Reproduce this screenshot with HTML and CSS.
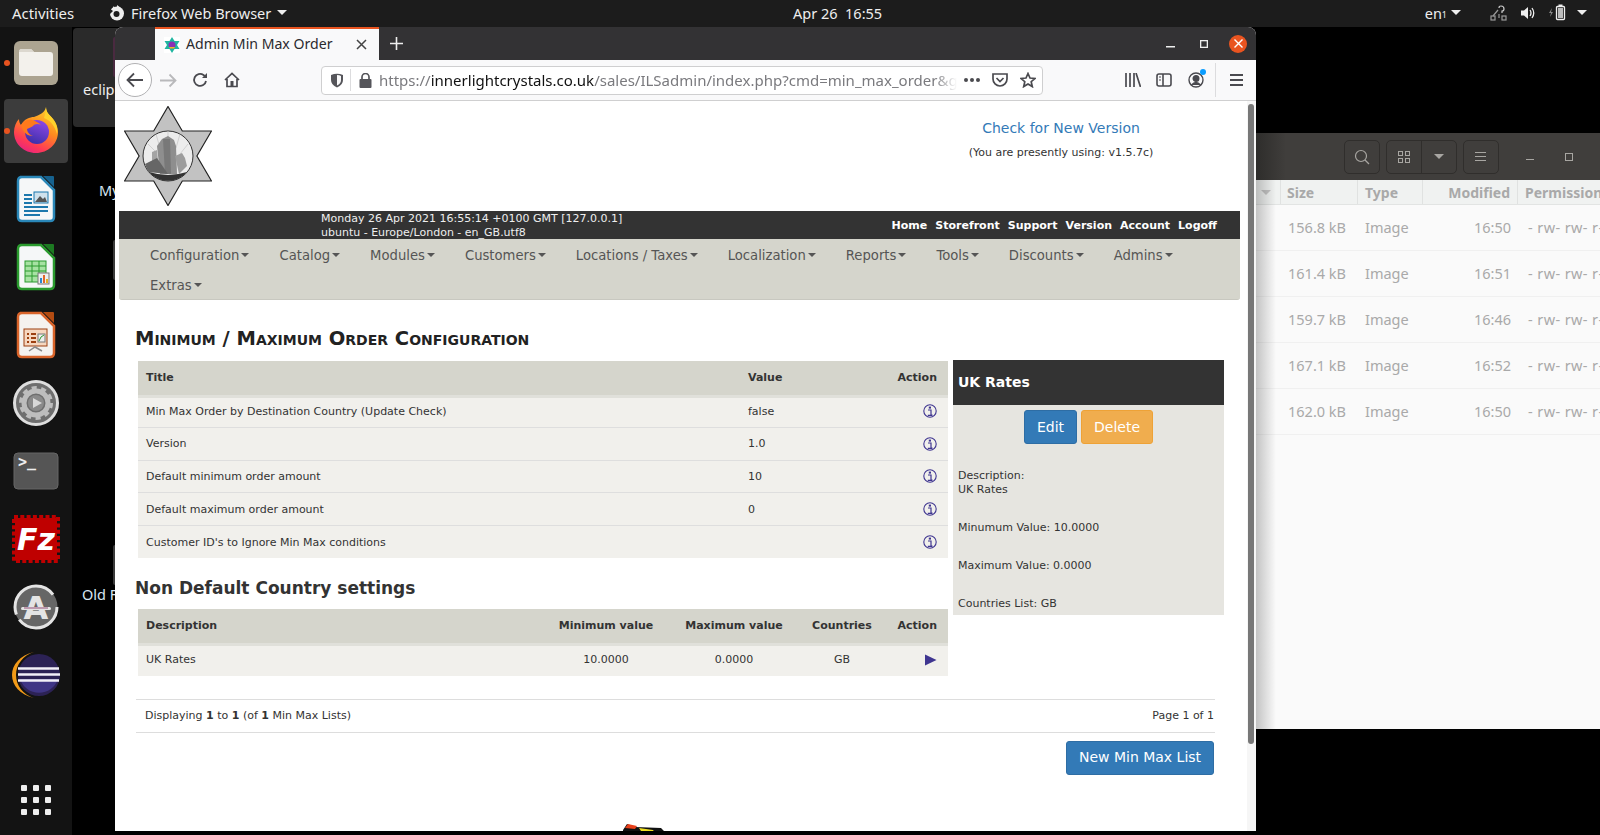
FILE: index.html
```html
<!DOCTYPE html>
<html lang="en">
<head>
    <meta charset="UTF-8">
    <title>Admin Min Max Order</title>
    <link rel="stylesheet" href="styles.css">
</head>
<body>
<div class="topbar">
    <span class="activities">Activities</span>
    <span class="app-menu">
        <svg width="16" height="16" viewBox="0 0 16 16"><circle cx="8" cy="8.5" r="7" fill="#eee"/><circle cx="7.5" cy="9" r="3" fill="#1c1c1c"/><path d="M1 6 L5 1 L6 6 Z M8 0 L12 3 L8 5 Z" fill="#eee"/><path d="M0 3 L4 6 L1 9 Z" fill="#1c1c1c"/></svg>
        Firefox Web Browser <i class="tri"></i>
    </span>
    <span class="clock">Apr 26&nbsp;&nbsp;16:55</span>
    <span class="tray">
        <span class="lang">en<small>1</small> <i class="tri"></i></span>
        <svg class="net" width="18" height="16" viewBox="0 0 18 16" fill="none" stroke="#999" stroke-width="1.2"><rect x="1" y="11" width="4" height="4"/><rect x="12" y="11" width="4" height="4"/><path d="M3 11 L8 5 M9 9 V13"/><path d="M9 3 Q9 1 11 1 Q14 1 14 4 Q14 6 12 6 V8" stroke="#ccc"/></svg>
        <svg class="vol" width="15" height="14" viewBox="0 0 15 14"><path d="M0 4.5 H3 L7 1 V13 L3 9.5 H0 Z" fill="#eee"/><path d="M9 4 Q11 7 9 10 M11 2 Q14.500 7 11 12" fill="none" stroke="#eee" stroke-width="1.300"/></svg>
        <svg class="bat" width="17" height="17" viewBox="0 0 17 17"><path d="M3 4 L0 9 H2 L1 13 L4 8 H2 Z" fill="#888"/><rect x="7.500" y="2.500" width="8" height="13" rx="1" fill="none" stroke="#eee" stroke-width="1.300"/><rect x="9.500" y="0.500" width="4" height="2" fill="#eee"/><rect x="9" y="4" width="5" height="10" fill="#bbb"/></svg>
        <i class="tri"></i>
    </span>
</div>

<div class="screen">
    <nav class="dock">
        <div class="dock-item running">
            <svg width="48" height="48" viewBox="0 0 48 48"><rect x="2" y="2" width="44" height="44" rx="6" fill="#aca491"/><path d="M7 13 Q7 10 10 10 H19 L22 13 H38 Q41 13 41 16 V34 Q41 37 38 37 H10 Q7 37 7 34 Z" fill="#f3f1ec"/><path d="M7 13 Q7 10 10 10 H19 L22 13 Z" fill="#dcd8cf"/></svg>
        </div>
        <div class="dock-item running active">
            <svg width="48" height="48" viewBox="0 0 48 48">
                <defs>
                    <linearGradient id="fxbody" x1="0.800" y1="0" x2="0.300" y2="1"><stop offset="0" stop-color="#ffd52e"/><stop offset="0.450" stop-color="#ff8a1f"/><stop offset="0.800" stop-color="#ff3a55"/><stop offset="1" stop-color="#e8247f"/></linearGradient>
                    <linearGradient id="fxglobe" x1="0.700" y1="0" x2="0.300" y2="1"><stop offset="0" stop-color="#8f47e6"/><stop offset="1" stop-color="#3a2fa8"/></linearGradient>
                </defs>
                <path d="M34 0 C34 6 38 8 41 12 C45 17 46 22 46 25 C46 37 36 46 24 46 C12 46 2 37 2 25 C2 20 4 15 7 12 C7 15 8 17 9 18 C12 12 18 10 22 10 C27 8 33 6 34 0 Z" fill="url(#fxbody)"/>
                <circle cx="25" cy="25" r="12" fill="url(#fxglobe)"/>
                <path d="M9 18 C12 13 17 12 20 13 C24 14 27 16 29 18 C26 16 22 17 21 19 C20 20 17 21 15 22 C15 25 18 28 21 29 C16 29 11 26 9 18 Z" fill="#ff7a1c"/>
                <path d="M34 0 C34 6 38 8 41 12 C45 17 46 22 45 27 C43 19 38 13 32 11 C33 7 34 4 34 0 Z" fill="#ffd22c"/>
            </svg>
        </div>
        <div class="dock-item">
            <svg width="48" height="48" viewBox="0 0 48 48"><path d="M8 2 H29 L42 15 V42 Q42 46 38 46 H10 Q6 46 6 42 V6 Q6 2 10 2 Z" fill="#f5f7f8" stroke="#2a87b8" stroke-width="2.500"/><path d="M31 1 H41 Q42 1 42 2 V12 Z" fill="#16628f"/><path d="M12 20 H20 M12 24 H20 M12 28 H20 M12 32 H36 M12 36 H36 M12 40 H28" stroke="#1c78ad" stroke-width="2"/><rect x="22" y="17" width="14" height="11" fill="#cfe1ec" stroke="#1c78ad"/><path d="M23 27 L28 21 L31 24 L33 22 L35 27 Z" fill="#555"/></svg>
        </div>
        <div class="dock-item">
            <svg width="48" height="48" viewBox="0 0 48 48"><path d="M8 2 H29 L42 15 V42 Q42 46 38 46 H10 Q6 46 6 42 V6 Q6 2 10 2 Z" fill="#f5f7f8" stroke="#2a9a2e" stroke-width="2.500"/><path d="M31 1 H41 Q42 1 42 2 V12 Z" fill="#1d7a22"/><rect x="13" y="18" width="21" height="21" fill="#a6e2a2" stroke="#2a9a2e"/><path d="M13 23 H34 M13 28 H34 M13 33 H34 M20 18 V39 M27 18 V39" stroke="#2a9a2e"/><rect x="26" y="30" width="11" height="11" fill="#eee" stroke="#777"/><rect x="28" y="35" width="2" height="5" fill="#2a87d0"/><rect x="31" y="32" width="2" height="8" fill="#e0662a"/><rect x="34" y="36" width="2" height="4" fill="#e8b020"/></svg>
        </div>
        <div class="dock-item">
            <svg width="48" height="48" viewBox="0 0 48 48"><path d="M8 2 H29 L42 15 V42 Q42 46 38 46 H10 Q6 46 6 42 V6 Q6 2 10 2 Z" fill="#f5f2ef" stroke="#d9642a" stroke-width="2.500"/><path d="M31 1 H41 Q42 1 42 2 V12 Z" fill="#b34c12"/><rect x="12" y="18" width="23" height="17" fill="#f6d7c0" stroke="#9c3f10"/><path d="M15 23 H17 M15 27 H17 M15 31 H17 M19 23 H24 M19 27 H24 M19 31 H24" stroke="#9c3f10" stroke-width="2"/><rect x="26" y="23" width="7" height="8" fill="#eee" stroke="#777"/><path d="M27 30 L29 26 L32 24" stroke="#2a9a2e" fill="none"/><path d="M17 40 L23 36 L30 40" stroke="#888" fill="none" stroke-width="1.500"/></svg>
        </div>
        <div class="dock-item">
            <svg width="48" height="48" viewBox="0 0 48 48"><circle cx="24" cy="24" r="21.500" fill="#6e6e6e" stroke="#dedede" stroke-width="3"/><circle cx="24" cy="24" r="12" fill="none" stroke="#bdbdbd" stroke-width="5"/><circle cx="24" cy="24" r="15" fill="none" stroke="#bdbdbd" stroke-width="4" stroke-dasharray="5 4.420"/><circle cx="24" cy="24" r="8" fill="#8a8a8a"/><path d="M21 19 L30 24 L21 29 Z" fill="#d8d8d8"/></svg>
        </div>
        <div class="dock-item">
            <svg width="48" height="48" viewBox="0 0 48 48"><rect x="2" y="6" width="44" height="36" rx="4" fill="#555" stroke="#666"/><text x="6" y="20" class="term-text">&gt;_</text></svg>
        </div>
        <div class="dock-item">
            <svg width="48" height="48" viewBox="0 0 48 48"><rect x="3" y="3" width="42" height="42" fill="#bf0000"/><rect x="2" y="2" width="44" height="44" fill="none" stroke="#bf0000" stroke-width="4" stroke-dasharray="4 2.300"/><text x="5" y="35" class="fz-text">Fz</text></svg>
        </div>
        <div class="dock-item">
            <svg width="48" height="48" viewBox="0 0 48 48"><circle cx="24" cy="24" r="21.500" fill="#666"/><circle cx="24" cy="24" r="21" fill="none" stroke="#e4e4e4" stroke-width="3" stroke-dasharray="52 6 60 14"/><text x="24" y="36" class="upd-text">A</text><rect x="9" y="24" width="30" height="3" rx="1.500" fill="#e4e4e4"/><rect x="12" y="24.500" width="24" height="1" fill="#95507a"/></svg>
        </div>
        <div class="dock-item">
            <svg width="48" height="48" viewBox="0 0 48 48"><path d="M22 1 C8 4 0 14 0 24 C0 34 8 44 22 47 C11 44 4 34 4 24 C4 14 11 4 22 1 Z" fill="#f29a18"/><circle cx="27" cy="24" r="21" fill="#2c2255"/><path d="M8 28 H46 A20 20 0 0 1 8 28 Z" fill="#3f3585"/><path d="M6 17.500 H47 M6 23.500 H48 M6 29.500 H47" stroke="#f2f0f8" stroke-width="2.500"/></svg>
        </div>
        <div class="app-grid">
            <i></i><i></i><i></i><i></i><i></i><i></i><i></i><i></i><i></i>
        </div>
    </nav>

    <div class="desktop">
        <div class="desk-tile">eclip</div>
        <span class="desk-label my">My</span>
        <span class="desk-label old">Old F</span>
        <i class="desk-thumb thumb-a"></i>
        <i class="desk-thumb thumb-b"></i>
        <i class="desk-thumb thumb-c"></i>

        <!-- file manager behind the browser -->
        <div class="files">
            <div class="files-head">
                <span class="hbtn"><svg width="16" height="16" viewBox="0 0 16 16" fill="none" stroke="#a8a6a2" stroke-width="1.200"><circle cx="7" cy="7" r="5.500"/><path d="M11 11 L15 15"/></svg></span>
                <span class="hbtn split">
                    <span class="seg"><svg width="12" height="12" viewBox="0 0 12 12" fill="none" stroke="#a8a6a2"><rect x="0.500" y="0.500" width="4" height="4"/><rect x="7.500" y="0.500" width="4" height="4"/><rect x="0.500" y="7.500" width="4" height="4"/><rect x="7.500" y="7.500" width="4" height="4"/></svg></span>
                    <span class="seg"><i class="files-tri"></i></span>
                </span>
                <span class="hbtn"><svg width="12" height="10" viewBox="0 0 12 10" stroke="#a8a6a2"><path d="M0 0.500 H11 M0 4.500 H11 M0 8.500 H11"/></svg></span>
                <span class="win-min"></span>
                <span class="win-max"></span>
            </div>
            <div class="files-cols">
                <span class="c-name"><i class="sort-tri"></i></span>
                <span class="c-size">Size</span>
                <span class="c-type">Type</span>
                <span class="c-mod">Modified</span>
                <span class="c-perm">Permission</span>
            </div>
            <div class="files-row"><span class="c-name"></span><span class="c-size">156.8 kB</span><span class="c-type">Image</span><span class="c-mod">16:50</span><span class="c-perm">- rw- rw- r--</span></div>
            <div class="files-row"><span class="c-name"></span><span class="c-size">161.4 kB</span><span class="c-type">Image</span><span class="c-mod">16:51</span><span class="c-perm">- rw- rw- r--</span></div>
            <div class="files-row"><span class="c-name"></span><span class="c-size">159.7 kB</span><span class="c-type">Image</span><span class="c-mod">16:46</span><span class="c-perm">- rw- rw- r--</span></div>
            <div class="files-row"><span class="c-name"></span><span class="c-size">167.1 kB</span><span class="c-type">Image</span><span class="c-mod">16:52</span><span class="c-perm">- rw- rw- r--</span></div>
            <div class="files-row"><span class="c-name"></span><span class="c-size">162.0 kB</span><span class="c-type">Image</span><span class="c-mod">16:50</span><span class="c-perm">- rw- rw- r--</span></div>
        </div>

        <!-- browser window -->
        <div class="browser">
            <div class="tabbar">
                <div class="tab">
                    <svg width="16" height="16" viewBox="0 0 16 16"><rect width="16" height="16" fill="#fff"/><path d="M8 0 L10.500 4 H15.500 L13 8 L15.500 12 H10.500 L8 16 L5.500 12 H0.500 L3 8 L0.500 4 H5.500 Z" fill="#1fb5a0"/><circle cx="8" cy="8" r="3.500" fill="#8a2fb5"/><path d="M5 10 H11 L10 11.500 H6 Z" fill="#e8c020"/></svg>
                    <span class="tab-title">Admin Min Max Order</span>
                    <svg class="tab-close" width="11" height="11" viewBox="0 0 11 11" stroke="#444" stroke-width="1.500"><path d="M1 1 L10 10 M10 1 L1 10"/></svg>
                </div>
                <svg class="new-tab" width="15" height="15" viewBox="0 0 15 15" stroke="#eee" stroke-width="1.600"><path d="M7.500 1 V14 M1 7.500 H14"/></svg>
                <svg class="ctl-min" width="9" height="2" viewBox="0 0 9 2"><rect width="9" height="1.500" fill="#eee"/></svg>
                <svg class="ctl-max" width="8" height="8" viewBox="0 0 8 8" fill="none" stroke="#eee" stroke-width="1.300"><rect x="0.650" y="0.650" width="6.700" height="6.700"/></svg>
                <span class="ctl-close"><svg width="9" height="9" viewBox="0 0 9 9" stroke="#fff" stroke-width="1.400"><path d="M0.500 0.500 L8.500 8.500 M8.500 0.500 L0.500 8.500"/></svg></span>
            </div>

            <div class="toolbar">
                <span class="back"><svg width="18" height="16" viewBox="0 0 18 16" fill="none" stroke="#4a4a4f" stroke-width="1.800"><path d="M17 8 H2 M8 1.500 L1.500 8 L8 14.500"/></svg></span>
                <span class="tool"><svg width="17" height="15" viewBox="0 0 17 15" fill="none" stroke="#b9b9bb" stroke-width="1.800"><path d="M0 7.500 H15 M9.500 1.500 L15.500 7.500 L9.500 13.500"/></svg></span>
                <span class="tool"><svg width="16" height="16" viewBox="0 0 16 16" fill="none" stroke="#4a4a4f" stroke-width="1.800"><path d="M14 9 A6 6 0 1 1 11.500 3 L14 5"/><path d="M15 1 V6 H10 Z" fill="#4a4a4f" stroke="none"/></svg></span>
                <span class="tool"><svg width="16" height="16" viewBox="0 0 16 16" fill="none" stroke="#4a4a4f" stroke-width="1.700"><path d="M1 8 L8 1.500 L15 8 M3 7 V14.500 H13 V7"/><rect x="6.500" y="9" width="3" height="5.500" fill="#4a4a4f" stroke="none"/></svg></span>
                <div class="urlbar">
                    <svg class="shield" width="14" height="15" viewBox="0 0 14 15"><path d="M1 2 Q7 -0.500 13 2 V7 Q13 12 7 14.500 Q1 12 1 7 Z" fill="#55555a"/><path d="M7 2 Q9.500 2 11 3 V7 Q11 10.500 7 12.500 Z" fill="#f9f9fa"/></svg>
                    <i class="url-sep"></i>
                    <svg class="lock" width="13" height="15" viewBox="0 0 13 15"><rect x="0.500" y="6" width="12" height="9" rx="1" fill="#55555a"/><path d="M3 6.500 V4 A3.500 3.500 0 0 1 10 4 V6.500" fill="none" stroke="#55555a" stroke-width="1.700"/></svg>
                    <span class="url">https://<b>innerlightcrystals.co.uk</b>/sales/ILSadmin/index.php?cmd=min_max_order&amp;gID=7&amp;action=edit</span>
                    <svg class="dots" width="16" height="4" viewBox="0 0 16 4" fill="#4a4a4f"><circle cx="2" cy="2" r="2"/><circle cx="8" cy="2" r="2"/><circle cx="14" cy="2" r="2"/></svg>
                    <svg class="pocket" width="16" height="14" viewBox="0 0 16 14" fill="none" stroke="#4a4a4f" stroke-width="1.700"><path d="M1 1 H15 V6 A7 7 0 0 1 1 6 Z"/><path d="M4.500 5 L8 8.500 L11.500 5"/></svg>
                    <svg class="star" width="16" height="16" viewBox="0 0 16 16" fill="none" stroke="#4a4a4f" stroke-width="1.700"><path d="M8 1.500 L10 6 L15 6.500 L11.200 9.700 L12.300 14.600 L8 12 L3.700 14.600 L4.800 9.700 L1 6.500 L6 6 Z"/></svg>
                </div>
                <span class="tool lib"><svg width="16" height="14" viewBox="0 0 16 14" stroke="#4a4a4f" stroke-width="1.700"><path d="M1 0 V14 M5 0 V14 M9 0 V14 M11 0 L15.500 14"/></svg></span>
                <span class="tool"><svg width="16" height="14" viewBox="0 0 16 14" fill="none" stroke="#4a4a4f" stroke-width="1.600"><rect x="1" y="1" width="14" height="12" rx="2"/><path d="M7 1 V13"/><path d="M3 4 H5 M3 7 H5" stroke-width="1.200"/></svg></span>
                <span class="tool acct"><svg width="16" height="16" viewBox="0 0 16 16" fill="none" stroke="#4a4a4f" stroke-width="1.400"><circle cx="8" cy="8" r="7"/><circle cx="8" cy="6.500" r="2.800" fill="#4a4a4f"/><path d="M3.500 13 Q8 8 12.500 13" fill="#4a4a4f"/></svg><i class="acct-dot"></i></span>
                <i class="tool-sep"></i>
                <span class="tool menu"><svg width="13" height="12" viewBox="0 0 13 12" stroke="#4a4a4f" stroke-width="1.800"><path d="M0 1 H13 M0 6 H13 M0 11 H13"/></svg></span>
            </div>

            <div class="viewport">
                <div class="page">
                    <div class="page-head">
                        <svg class="logo" width="88" height="100" viewBox="0 0 88 100">
                            <path d="M44 0.500 L58.300 25 H87.500 L72.900 50 L87.500 75 H58.300 L44 99.500 L29.700 75 H0.500 L15.100 50 L0.500 25 H29.700 Z" fill="#c2c2c2" stroke="#222" stroke-width="1.200"/>
                            <circle cx="44" cy="50" r="25" fill="#ececec" stroke="#333" stroke-width="1"/>
                            <path d="M32 28 L36 42 M56 28 L52 42 M44 25 V31 M24 38 L32 46 M64 38 L56 48" stroke="#c4c4c4" stroke-width="0.700"/>
                            <path d="M28 46 L33 44 L35 66 L28 64 Z" fill="#a4a4a4"/>
                            <path d="M33 40 L38 33 L44 30 L50 34 L52 40 L53 68 L36 68 Z" fill="#8e8e8e"/>
                            <path d="M39 33 L46 33 L47 68 L41 68 Z" fill="#787878"/>
                            <path d="M51 50 L58 47 L61 52 L63 60 L55 68 Z" fill="#9c9c9c"/>
                            <path d="M21 58 L33 52 L44 68 L24 66 Z" fill="#666"/>
                            <path d="M25 66 Q44 72 63 66 A25 25 0 0 1 25 66 Z" fill="#333"/>
                        </svg>
                        <div class="version">
                            <a class="version-link">Check for New Version</a>
                            <p>(You are presently using: v1.5.7c)</p>
                        </div>
                    </div>

                    <div class="statusbar">
                        <div class="status-info">Monday 26 Apr 2021 16:55:14 +0100 GMT [127.0.0.1]<br>ubuntu - Europe/London - en_GB.utf8</div>
                        <div class="status-links"><a>Home</a><a>Storefront</a><a>Support</a><a>Version</a><a>Account</a><a>Logoff</a></div>
                    </div>

                    <ul class="mainnav">
                        <li>Configuration<i class="caret"></i></li>
                        <li>Catalog<i class="caret"></i></li>
                        <li>Modules<i class="caret"></i></li>
                        <li>Customers<i class="caret"></i></li>
                        <li>Locations / Taxes<i class="caret"></i></li>
                        <li>Localization<i class="caret"></i></li>
                        <li>Reports<i class="caret"></i></li>
                        <li>Tools<i class="caret"></i></li>
                        <li>Discounts<i class="caret"></i></li>
                        <li>Admins<i class="caret"></i></li>
                        <li class="nav-break">Extras<i class="caret"></i></li>
                    </ul>

                    <div class="columns">
                        <div class="left-col">
                            <h1>Minimum / Maximum Order Configuration</h1>
                            <table class="data">
                                <colgroup><col class="w-title"><col class="w-value"><col></colgroup>
                                <tr><th>Title</th><th>Value</th><th class="right">Action</th></tr>
                                <tr><td>Min Max Order by Destination Country (Update Check)</td><td>false</td><td class="right"><svg class="info" width="14" height="14" viewBox="0 0 14 14"><use href="#info"/></svg></td></tr>
                                <tr><td>Version</td><td>1.0</td><td class="right"><svg class="info" width="14" height="14" viewBox="0 0 14 14"><use href="#info"/></svg></td></tr>
                                <tr><td>Default minimum order amount</td><td>10</td><td class="right"><svg class="info" width="14" height="14" viewBox="0 0 14 14"><use href="#info"/></svg></td></tr>
                                <tr><td>Default maximum order amount</td><td>0</td><td class="right"><svg class="info" width="14" height="14" viewBox="0 0 14 14"><use href="#info"/></svg></td></tr>
                                <tr><td>Customer ID's to Ignore Min Max conditions</td><td></td><td class="right"><svg class="info" width="14" height="14" viewBox="0 0 14 14"><use href="#info"/></svg></td></tr>
                            </table>

                            <h2>Non Default Country settings</h2>
                            <table class="data">
                                <colgroup><col class="w-desc"><col class="w-min"><col class="w-max"><col class="w-cty"><col></colgroup>
                                <tr><th>Description</th><th class="center">Minimum value</th><th class="center">Maximum value</th><th class="center">Countries</th><th class="right">Action</th></tr>
                                <tr><td>UK Rates</td><td class="center">10.0000</td><td class="center">0.0000</td><td class="center">GB</td><td class="right"><svg class="play" width="13" height="12" viewBox="0 0 13 12"><path d="M1 0.500 L12.500 6 L1 11.500 Z" fill="#3f3590"/></svg></td></tr>
                            </table>
                        </div>

                        <aside class="panel">
                            <div class="panel-title">UK Rates</div>
                            <div class="panel-btns"><a class="btn blue">Edit</a><a class="btn orange">Delete</a></div>
                            <p>Description:<br>UK Rates</p>
                            <p>Minumum Value: 10.0000</p>
                            <p>Maximum Value: 0.0000</p>
                            <p>Countries List: GB</p>
                        </aside>
                    </div>

                    <div class="pager">
                        <span>Displaying <b>1</b> to <b>1</b> (of <b>1</b> Min Max Lists)</span>
                        <span>Page 1 of 1</span>
                    </div>
                    <div class="page-actions"><a class="btn blue new-list">New Min Max List</a></div>
                    <div class="page-foot">
                        <svg width="42" height="12" viewBox="0 0 42 12"><path d="M0 6 L4 0 L12 3 L38 4 L42 8 V12 H0 Z" fill="#111"/><path d="M2 4 L5 0 L14 2 L12 5 Z" fill="#e8401a"/><path d="M16 4 L30 6 L32 9 L18 7 Z" fill="#f0e020"/></svg>
                    </div>
                </div>
                <div class="scrollbar"><i class="thumb"></i></div>
            </div>
        </div>
    </div>
</div>

<svg class="defs" width="0" height="0">
    <symbol id="info" viewBox="0 0 14 14">
        <circle cx="7" cy="7" r="6.200" fill="none" stroke="#3f3590" stroke-width="1.100"/>
        <rect x="5.800" y="2.600" width="2.200" height="2" fill="#3f3590"/>
        <path d="M5 6 H8 V11 H9.500 M4.800 11.300 H9.500" fill="none" stroke="#3f3590" stroke-width="1.200"/>
    </symbol>
</svg>
</body>
</html>
```

FILE: styles.css
```css
* {
    box-sizing: border-box;
}

html, body {
    margin: 0;
    height: 835px;
    overflow: hidden;
    background: #000;
}

body {
    font-family: "DejaVu Sans", sans-serif;
    font-size: 11px;
    color: #333;
}

svg {
    display: block;
    flex: none;
}

.defs {
    position: absolute;
}

/* top bar */
.topbar {
    height: 27px;
    padding-bottom: 2px;
    background: #1c1c1c;
    color: #eee;
    font-family: "Noto Sans", sans-serif;
    font-size: 14.9px;
    display: flex;
    align-items: center;
    position: relative;
}

.activities {
    margin-left: 12px;
}

.app-menu {
    margin-left: 35px;
    display: flex;
    align-items: center;
    gap: 6px;
    font-size: 14.5px;
}

.clock {
    position: absolute;
    left: 793px;
    font-size: 14.5px;
}

.tray {
    margin-left: auto;
    display: flex;
    align-items: center;
    font-size: 14.5px;
}

.lang {
    display: flex;
    align-items: center;
    gap: 4px;
}

.lang small {
    font-size: 9px;
    margin: 4px 0 0 -4px;
}

.net {
    margin-left: 29px;
}

.vol {
    margin-left: 13px;
}

.bat {
    margin-left: 13px;
}

.tray > .tri {
    margin: 0 13px 0 11px;
}

.tri {
    display: inline-block;
    border-left: 5px solid transparent;
    border-right: 5px solid transparent;
    border-top: 5px solid #eee;
}

/* dock */
.screen {
    display: flex;
    height: 808px;
}

.dock {
    width: 72px;
    flex: none;
    background: #131313;
    padding-top: 2px;
    display: flex;
    flex-direction: column;
    align-items: center;
}

.dock-item {
    width: 64px;
    height: 68px;
    flex: none;
    display: flex;
    align-items: center;
    justify-content: center;
    position: relative;
}

.dock-item.active {
    background: #3c3c3c;
    border-radius: 4px;
    height: 64px;
    margin: 2px 0;
}

.dock-item.running::before {
    content: "";
    position: absolute;
    left: 0;
    top: 50%;
    width: 6px;
    height: 6px;
    margin-top: -3px;
    background: #e95420;
    border-radius: 50%;
}

.term-text {
    font-family: "DejaVu Sans Mono", monospace;
    font-weight: bold;
    font-size: 15px;
    fill: #eee;
}

.fz-text {
    font-family: "DejaVu Sans", sans-serif;
    font-weight: bold;
    font-style: italic;
    font-size: 30px;
    fill: #fff;
}

.upd-text {
    font-family: "DejaVu Sans", sans-serif;
    font-weight: bold;
    font-size: 32px;
    text-anchor: middle;
    fill: #e4e4e4;
}

.app-grid {
    margin-top: 76px;
    width: 30px;
    display: grid;
    grid-template-columns: repeat(3, 6px);
    justify-content: space-between;
    row-gap: 6px;
}

.app-grid i {
    height: 6px;
    background: #eee;
    border-radius: 1px;
}

/* desktop */
.desktop {
    flex: 1;
    position: relative;
    overflow: hidden;
}

.desk-tile {
    position: absolute;
    left: 1px;
    top: 1px;
    width: 60px;
    height: 99px;
    background: #2a2a2a;
    border-radius: 4px;
    color: #eee;
    font-family: "Noto Sans", sans-serif;
    font-size: 14.5px;
    padding: 51px 0 0 10px;
}

.desk-label {
    position: absolute;
    color: #d8e6f2;
    font-family: "Noto Sans", sans-serif;
    font-size: 14.5px;
}

.my {
    left: 27px;
    top: 153px;
}

.old {
    left: 10px;
    top: 557px;
}

.desk-thumb {
    position: absolute;
    left: 41px;
    width: 4px;
    background: #3a3a3a;
    border-radius: 2px 0 0 2px;
}

.thumb-a {
    top: 10px;
    height: 40px;
    background: #4a2a40;
}

.thumb-b {
    top: 213px;
    height: 40px;
}

.thumb-c {
    top: 518px;
    height: 40px;
}

/* files window */
.files {
    position: absolute;
    left: 1184px;
    top: 106px;
    width: 344px;
    height: 596px;
    background: #fafafa;
    font-family: "Noto Sans", sans-serif;
}

.files::after {
    content: "";
    position: absolute;
    left: 0;
    top: 47px;
    bottom: 0;
    width: 20px;
    background: linear-gradient(to right, rgba(0,0,0,.22), rgba(0,0,0,0));
}

.files-head {
    height: 47px;
    background: linear-gradient(to right, #2e2d2b, #403e3c 30px);
    display: flex;
    align-items: center;
    padding-left: 88px;
    gap: 6px;
}

.hbtn {
    width: 36px;
    height: 34px;
    border: 1px solid #302e2c;
    border-radius: 5px;
    display: flex;
    align-items: center;
    justify-content: center;
}

.split {
    width: 71px;
}

.seg {
    flex: 1;
    height: 100%;
    display: flex;
    align-items: center;
    justify-content: center;
}

.seg + .seg {
    border-left: 1px solid #302e2c;
}

.files-tri {
    border-left: 5px solid transparent;
    border-right: 5px solid transparent;
    border-top: 5px solid #a8a6a2;
}

.win-min {
    width: 8px;
    height: 1px;
    background: #a8a6a2;
    margin: 5px 0 0 21px;
}

.win-max {
    width: 8px;
    height: 8px;
    border: 1px solid #a8a6a2;
    margin-left: 25px;
}

.files-cols,
.files-row {
    display: flex;
    align-items: center;
}

.files-cols {
    height: 25px;
    background: #f0f2f1;
    border-bottom: 1px solid #e2e4e3;
    color: #a9a9a9;
    font-weight: bold;
    font-size: 14px;
    white-space: nowrap;
}

.files-cols span {
    height: 100%;
    display: flex;
    align-items: center;
    border-right: 1px solid #e0e2e1;
}

.files-row {
    height: 46px;
    padding-bottom: 2px;
    border-bottom: 1px solid #f0f0f0;
    color: #a9a9a9;
    font-size: 14.5px;
    white-space: nowrap;
}

.c-name {
    width: 25px;
    flex: none;
}

.c-size {
    width: 77px;
    flex: none;
    padding-left: 6px;
}

.files-row .c-size {
    padding-left: 7px;
}

.c-type {
    width: 65px;
    flex: none;
    padding-left: 7px;
}

.c-mod {
    width: 95px;
    flex: none;
    padding-right: 7px;
    justify-content: flex-end;
    text-align: right;
}

.c-perm {
    flex: none;
    padding-left: 7px;
}

.files-cols .c-perm {
    border-right: 0;
}

.files-row .c-perm {
    padding-left: 10px;
    letter-spacing: 0.4px;
}

.sort-tri {
    border-left: 5px solid transparent;
    border-right: 5px solid transparent;
    border-top: 5px solid #c4c4c4;
    margin-left: 5px;
}

/* browser window */
.browser {
    position: absolute;
    left: 43px;
    top: 0;
    width: 1141px;
    height: 804px;
    border-radius: 8px 8px 0 0;
    overflow: hidden;
    display: flex;
    flex-direction: column;
    background: #fff;
}

.tabbar {
    height: 33px;
    flex: none;
    background: #333234;
    display: flex;
    align-items: center;
    padding-left: 40px;
    position: relative;
}

.tab {
    width: 224px;
    height: 33px;
    background: #f9f9fa;
    border-top: 2px solid #e95420;
    display: flex;
    align-items: center;
    padding: 0 12px 0 9px;
    font-family: "Noto Sans", sans-serif;
    font-size: 14.1px;
    color: #2a2a2e;
}

.tab-title {
    margin-left: 6px;
    margin-bottom: 3px;
    flex: 1;
}

.new-tab {
    margin-left: 10px;
}

.ctl-min {
    margin-left: 762px;
    margin-top: 6px;
}

.ctl-max {
    margin-left: 25px;
}

.ctl-close {
    width: 18px;
    height: 18px;
    border-radius: 50%;
    background: #e95420;
    margin-left: 21px;
    display: flex;
    align-items: center;
    justify-content: center;
}

.toolbar {
    height: 41px;
    flex: none;
    background: #f9f9fa;
    border-bottom: 1px solid #cfcfd0;
    display: flex;
    align-items: center;
    padding-left: 3px;
}

.back {
    width: 34px;
    height: 34px;
    border: 1px solid #b1b1b3;
    border-radius: 50%;
    background: #fff;
    display: flex;
    align-items: center;
    justify-content: center;
}

.tool {
    width: 32px;
    height: 32px;
    display: flex;
    align-items: center;
    justify-content: center;
    position: relative;
}

.lib {
    width: 31px;
}

.urlbar {
    width: 722px;
    height: 29px;
    margin-left: 73px;
    margin-right: 74px;
    background: #fff;
    border: 1px solid #cfcfd0;
    border-radius: 4px;
    display: flex;
    align-items: center;
    padding-left: 8px;
    font-family: "Noto Sans", sans-serif;
    font-size: 15px;
    color: #7a7a7e;
}

.url-sep {
    width: 1px;
    height: 22px;
    background: #dcdcde;
    margin-left: 6px;
}

.lock {
    margin-left: 8px;
}

.url {
    margin-left: 7px;
    width: 578px;
    white-space: nowrap;
    overflow: hidden;
    -webkit-mask-image: linear-gradient(to right, #000 96%, transparent);
    mask-image: linear-gradient(to right, #000 96%, transparent);
}

.url b {
    font-weight: normal;
    color: #111;
}

.dots {
    margin-left: 7px;
}

.pocket {
    margin-left: 12px;
}

.star {
    margin-left: 12px;
}

.acct-dot {
    position: absolute;
    right: 6px;
    top: 5px;
    width: 6px;
    height: 6px;
    border-radius: 50%;
    background: #0a9dff;
}

.tool-sep {
    width: 1px;
    height: 34px;
    background: #dcdcde;
    margin: 0 4px 0 3px;
}

/* page in the browser */
.viewport {
    flex: 1;
    display: flex;
    min-height: 0;
}

.page {
    flex: 1;
    min-width: 0;
    position: relative;
    overflow: hidden;
}

.scrollbar {
    width: 9px;
    background: #f6f6f6;
    padding: 3px 2px 0 1px;
    flex: none;
}

.thumb {
    display: block;
    height: 640px;
    background: #777;
    border-radius: 3px;
}

.page-head {
    height: 110px;
    display: flex;
    padding: 5px 6px 0 9px;
}

.version {
    margin-left: auto;
    width: 360px;
    text-align: center;
    padding-top: 12px;
}

.version-link {
    color: #337ab7;
    font-size: 14px;
    line-height: 20px;
    display: block;
}

.version p {
    margin: 8px 0 0;
    line-height: 14px;
}

.statusbar {
    height: 28px;
    margin: 0 7px 0 4px;
    background: #333;
    color: #eee;
    display: flex;
    justify-content: space-between;
    padding: 1px 23px 0 202px;
    line-height: 14px;
}

.status-links {
    display: flex;
    gap: 8px;
    align-items: center;
    font-weight: bold;
    color: #fff;
}

.mainnav {
    list-style: none;
    margin: 0 7px 0 4px;
    height: 61px;
    padding: 1px 0 0 16px;
    background: #d5d5cc;
    border-bottom: 1px solid #c8c8c0;
    border-radius: 0 0 3px 3px;
    display: flex;
    flex-wrap: wrap;
    color: #555;
    font-size: 13.2px;
}

.mainnav li {
    height: 30px;
    padding: 0 15px;
    display: flex;
    align-items: center;
}

.nav-break {
    margin-right: 900px;
}

.caret {
    margin-left: 2px;
    border-left: 4px solid transparent;
    border-right: 4px solid transparent;
    border-top: 4px solid #555;
}

.columns {
    display: flex;
    padding-left: 20px;
}

.left-col {
    width: 813px;
    flex: none;
}

h1 {
    margin: 28px 0 11px;
    font-size: 19.5px;
    line-height: 22px;
    font-variant: small-caps;
    font-weight: bold;
    color: #222;
    white-space: nowrap;
}

h2 {
    margin: 19px 0 10px;
    font-size: 17px;
    line-height: 22px;
    font-weight: bold;
    color: #333;
}

.data {
    width: 810px;
    margin-left: 3px;
    border-collapse: collapse;
    table-layout: fixed;
}

.data th {
    height: 35px;
    padding: 0 8px 1px;
    background: #d5d5cc;
    border-bottom: 3px solid #e0e0da;
    text-align: left;
    font-weight: bold;
}

.data td {
    height: 32.700px;
    padding: 0 8px;
    background: #f1f0ec;
    border-top: 1px solid #dedede;
}

.data tr:nth-child(2) td {
    height: 31.400px;
    padding-bottom: 2px;
    border-top: 0;
}

.data .right {
    text-align: right;
    padding-right: 11px;
}

.data th.right {
    padding-right: 11px;
}

.data .center {
    text-align: center;
}

.info,
.play {
    display: inline-block;
    vertical-align: middle;
}

.w-title {
    width: 602px;
}

.w-value {
    width: 120px;
}

.w-desc {
    width: 402px;
}

.w-min {
    width: 132px;
}

.w-max {
    width: 124px;
}

.w-cty {
    width: 92px;
}

.panel {
    width: 271px;
    margin: 60px 0 0 5px;
    height: 255px;
    background: #e6e5e0;
    flex: none;
}

.panel-title {
    height: 45px;
    background: #333;
    color: #fff;
    font-size: 14px;
    font-weight: bold;
    line-height: 45px;
    padding-left: 5px;
}

.panel-btns {
    display: flex;
    justify-content: center;
    gap: 4px;
    margin: 5px 0 25px;
}

.panel p {
    margin: 0 0 24px;
    padding-left: 5px;
    line-height: 14px;
}

.btn {
    height: 34px;
    padding: 0 12px;
    border: 1px solid transparent;
    border-radius: 3px;
    color: #fff;
    font-size: 14px;
    display: flex;
    align-items: center;
}

.blue {
    background: #337ab7;
    border-color: #2e6da4;
}

.orange {
    background: #f0ad4e;
    border-color: #eea236;
}

.pager {
    margin: 23px 32px 0 21px;
    height: 34px;
    border-top: 1px solid #ddd;
    border-bottom: 1px solid #ddd;
    padding: 0 1px 0 9px;
    display: flex;
    align-items: center;
    justify-content: space-between;
}

.page-actions {
    display: flex;
    justify-content: flex-end;
    margin: 8px 33px 0 0;
}

.new-list {
    width: 148px;
    justify-content: center;
    padding: 0 0 2px;
}

.page-foot {
    padding-left: 508px;
    margin-top: 49px;
}
```
